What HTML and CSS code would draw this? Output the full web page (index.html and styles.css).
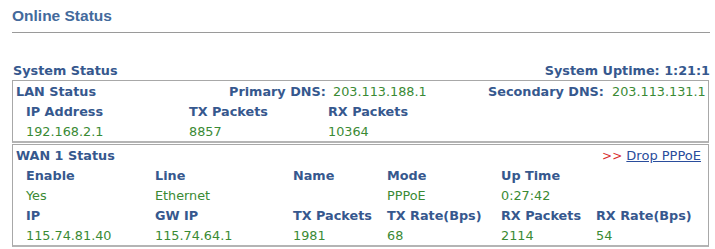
FILE: index.html
```html
<!DOCTYPE html>
<html lang="en">
<head>
<meta charset="utf-8">
<title>Online Status</title>
<link rel="stylesheet" href="styles.css">
</head>
<body>
<div class="page">
  <h1 class="title">Online Status</h1>
  <hr class="rule">

  <div class="sys-head">
    <span>System Status</span>
    <span>System Uptime: 1:21:1</span>
  </div>

  <div class="box">
    <div class="lan-top">
      <span class="lbl">LAN Status</span>
      <span class="lbl">Primary DNS:</span>
      <span class="val">203.113.188.1</span>
      <span class="lbl">Secondary DNS:</span>
      <span class="val">203.113.131.1</span>
    </div>
    <div class="grid lan-grid">
      <span class="lbl">IP Address</span>
      <span class="lbl">TX Packets</span>
      <span class="lbl">RX Packets</span>
      <span class="val">192.168.2.1</span>
      <span class="val">8857</span>
      <span class="val">10364</span>
    </div>
  </div>

  <div class="box wan">
    <div class="wan-top">
      <span class="lbl">WAN 1 Status</span>
      <span class="drop"><span class="arrows">&gt;&gt;</span> <a href="#">Drop PPPoE</a></span>
    </div>
    <div class="grid wan-grid">
      <span class="lbl">Enable</span>
      <span class="lbl">Line</span>
      <span class="lbl">Name</span>
      <span class="lbl">Mode</span>
      <span class="lbl">Up Time</span>
      <span></span>
      <span class="val">Yes</span>
      <span class="val">Ethernet</span>
      <span class="val"></span>
      <span class="val">PPPoE</span>
      <span class="val">0:27:42</span>
      <span></span>
      <span class="lbl">IP</span>
      <span class="lbl">GW IP</span>
      <span class="lbl">TX Packets</span>
      <span class="lbl">TX Rate(Bps)</span>
      <span class="lbl">RX Packets</span>
      <span class="lbl">RX Rate(Bps)</span>
      <span class="val">115.74.81.40</span>
      <span class="val">115.74.64.1</span>
      <span class="val">1981</span>
      <span class="val">68</span>
      <span class="val">2114</span>
      <span class="val">54</span>
    </div>
  </div>
</div>
</body>
</html>
```

FILE: styles.css
```css
body {
  margin: 0;
  background-color: white;
  font-family: "DejaVu Sans", Verdana, sans-serif;
  font-size: 12.8px;
}
.page {
  padding: 0 5px 0 12px;
}
.title {
  margin: 0;
  padding-top: 6px;
  height: 20px;
  line-height: 20px;
  font-family: "Liberation Sans", Arial, sans-serif;
  font-size: 15.5px;
  font-weight: bold;
  color: #436a9c;
}
.rule {
  margin: 6px 0 0 0;
  border: 0;
  border-top: 1px solid #9a9a9a;
  height: 0;
}
.sys-head {
  display: flex;
  justify-content: space-between;
  margin-top: 27px;
  padding: 0 0 0 1px;
  height: 20px;
  line-height: 21px;
  font-weight: bold;
  color: #36588e;
  width: 697px;
}
.box {
  width: 695px;
  border: 1px solid #a8a8a8;
  border-bottom: 2px solid #b4b4b4;
  line-height: 21px;
}
.wan {
  margin-top: 1px;
}
.lbl {
  font-weight: bold;
  color: #36588e;
}
.val {
  color: #3a8a34;
}
.lan-top {
  display: grid;
  grid-template-columns: 213px 104px 155px 124px 1fr;
  padding-left: 3px;
  height: 20px;
}
.grid {
  display: grid;
  padding-left: 13px;
}
.lan-grid {
  grid-template-columns: 163px 139px 1fr;
}
.wan-grid {
  grid-template-columns: 129px 138px 94px 114px 95px 1fr;
}
.grid span {
  height: 20px;
}
.wan-top {
  display: flex;
  justify-content: space-between;
  padding: 0 7px 0 3px;
  height: 20px;
}
.drop {
  font-size: 13px;
}
.arrows {
  color: #d83030;
  font-size: 12px;
}
a[href] {
  color: #2a4d9c;
}
```
